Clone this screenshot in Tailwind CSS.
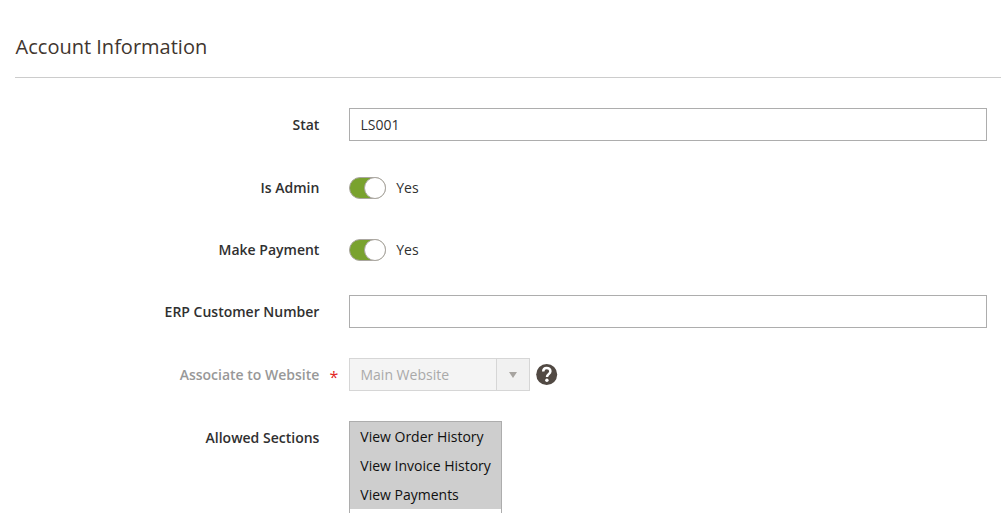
<!DOCTYPE html>
<html lang="en">
<head>
<meta charset="utf-8">
<title>Account Information</title>
<script src="https://cdn.jsdelivr.net/npm/@tailwindcss/browser@4"></script>
</head>
<body class="bg-white overflow-hidden font-['Open_Sans','Noto_Sans',sans-serif] text-[14px] leading-[33px] text-[#303030]">
<main class="h-[513px] overflow-hidden pl-[15px]">
  <h1 class="h-[78px] border-b border-[#cccccc] pt-[30px] pl-[0.6px] text-[20px] leading-[34px] text-[#41362f]">Account Information</h1>
  <form class="pt-[30px] pr-[14px]">
    <div class="flex h-[63px]">
      <label class="w-[304.4px] text-right font-semibold">Stat</label>
      <div class="ml-[29.6px] h-[33px] flex-1 border border-[#adadad] pl-[10.5px] leading-[32px]">LS001</div>
    </div>
    <div class="flex h-[62px]">
      <label class="w-[304.4px] text-right font-semibold">Is Admin</label>
      <div class="mt-[6px] ml-[29.6px] flex h-[22px] w-[37px] justify-end rounded-full border border-[#aaa6a0] bg-[#79a22e]"><span class="-m-px size-[22px] rounded-full border border-[#aaa6a0] bg-white"></span></div>
      <span class="ml-[10.3px]">Yes</span>
    </div>
    <div class="flex h-[62px]">
      <label class="w-[304.4px] text-right font-semibold">Make Payment</label>
      <div class="mt-[6px] ml-[29.6px] flex h-[22px] w-[37px] justify-end rounded-full border border-[#aaa6a0] bg-[#79a22e]"><span class="-m-px size-[22px] rounded-full border border-[#aaa6a0] bg-white"></span></div>
      <span class="ml-[10.3px]">Yes</span>
    </div>
    <div class="flex h-[63px]">
      <label class="w-[304.4px] text-right font-semibold">ERP Customer Number</label>
      <div class="ml-[29.6px] h-[33px] flex-1 border border-[#adadad]"></div>
    </div>
    <div class="flex h-[63px]">
      <label class="w-[304.4px] text-right font-semibold text-[#989898]">Associate to Website</label>
      <span class="w-[29.6px] pt-[3px] pl-[10px] text-[16px] text-[#e22626]">*</span>
      <div class="flex h-[33px] w-[181px] border border-[#d6d6d6] bg-[#f4f4f4] leading-[32px] text-[#a9a9a9]">
        <span class="flex-1 pl-[10.5px]">Main Website</span>
        <span class="flex w-[33px] items-center justify-center border-l border-[#d6d6d6] bg-[#f1f1f1]"><svg class="mt-px" width="8" height="6" viewBox="0 0 8 6"><path d="M0 0h8L4 6z" fill="#a7a4a0"/></svg></span>
      </div>
      <svg class="mt-[6px] ml-[6px]" width="22" height="22" viewBox="0 0 22 22"><circle cx="10.7" cy="10.5" r="10.5" fill="#514943"/><path d="M7.2 7.4C7.2 5 8.8 3.9 10.7 3.9s3.7 1.2 3.7 3.3c0 2.8-3.4 3-3.4 5.7" fill="none" stroke="#fff" stroke-width="2.5"/><circle cx="10.9" cy="16.3" r="1.7" fill="#fff"/></svg>
    </div>
    <div class="flex">
      <label class="w-[304.4px] text-right font-semibold">Allowed Sections</label>
      <div class="ml-[29.6px] h-[120px] w-[153px] border border-[#adadad] whitespace-nowrap text-[#101010]">
        <div class="h-[29px] bg-[#cecece] pl-[10.3px] leading-[30px]">View Order History</div>
        <div class="h-[29px] bg-[#cecece] pl-[10.3px] leading-[30px]">View Invoice History</div>
        <div class="h-[29px] bg-[#cecece] pl-[10.3px] leading-[30px]">View Payments</div>
      </div>
    </div>
  </form>
</main>
</body>
</html>
